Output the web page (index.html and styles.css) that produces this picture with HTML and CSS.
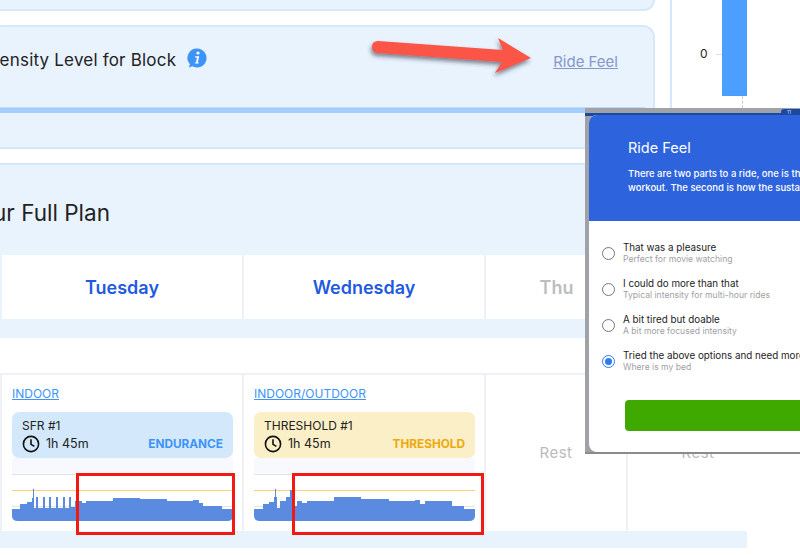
FILE: index.html
```html
<!DOCTYPE html>
<html lang="en">
<head>
<meta charset="utf-8">
<title>Ride Feel</title>
<link rel="stylesheet" href="styles.css">
</head>
<body>
<div class="page">
  <main class="main">
    <div class="stub-card"></div>
    <section class="level-card">
      <div class="level-row">
        <h2 class="level-title">Intensity Level for Block</h2>
        <svg class="info" viewBox="0 0 20 20" width="20" height="20"><path d="M10 0.5a9.5 9.5 0 1 1-4.6 17.8L1.6 19.5l1.4-3A9.5 9.5 0 0 1 10 0.5z" fill="#3d94f6"/><circle cx="11" cy="5" r="1.6" fill="#fff"/><path d="M8.3 8.2h3.9l-1.4 6.2h1.1l-.3 1.200H7.7l.3-1.200h1L10 9.400H8z" fill="#fff"/></svg>
        <a class="feel-link" href="#">Ride Feel</a>
      </div>
    </section>
    <div class="progress"></div>
    <div class="sub-band"></div>
    <section class="plan">
      <h1 class="plan-title">Your Full Plan</h1>
      <div class="days">
        <div class="day">Tuesday</div>
        <div class="day">Wednesday</div>
        <div class="day day-off">Thu</div>
      </div>
    </section>
    <div class="spacer"></div>
    <div class="cells">
      <div class="cell">
        <a class="kind" href="#">INDOOR</a>
        <div class="ride ride-blue">
          <div class="ride-name">SFR #1</div>
          <div class="ride-meta">
            <svg class="clock" viewBox="0 0 18 18" width="18" height="18"><circle cx="9" cy="9" r="7.600" fill="none" stroke="#111" stroke-width="1.600"/><path d="M9 4.200V9.400l3.400 2" fill="none" stroke="#111" stroke-width="1.600"/></svg>
            <span class="dur">1h 45m</span>
            <span class="zone zone-blue">ENDURANCE</span>
          </div>
        </div>
        <svg class="chart" viewBox="0 0 221 64" width="221" height="64">
          <rect width="221" height="16" fill="#f7f9fe"/>
          <path d="M0 16.500h221" stroke="#e4e4e8"/>
          <path d="M0 32.500h221" stroke="#fbcf75"/>
          <path d="M0 48.500h221" stroke="#e4e4e8"/>
          <path d="M21 31h1v12h-1z" fill="#5a8be0"/>
          <path d="M0 51H8V46H15V44H20V40H22V50H24V39H26V50H31V39H33V50H37V39H39V50H44V39H46V50H51V39H53V50H57V39H59V49H63V43H70V45H74V43H101V40H128V41H155V43H181V42H187V45H191V48H210V51H221V58Q221 63 215 63H6Q0 63 0 58Z" fill="#5a8be0"/>
        </svg>
      </div>
      <div class="cell">
        <a class="kind" href="#">INDOOR/OUTDOOR</a>
        <div class="ride ride-yellow">
          <div class="ride-name">THRESHOLD #1</div>
          <div class="ride-meta">
            <svg class="clock" viewBox="0 0 18 18" width="18" height="18"><circle cx="9" cy="9" r="7.600" fill="none" stroke="#111" stroke-width="1.600"/><path d="M9 4.200V9.400l3.400 2" fill="none" stroke="#111" stroke-width="1.600"/></svg>
            <span class="dur">1h 45m</span>
            <span class="zone zone-yellow">THRESHOLD</span>
          </div>
        </div>
        <svg class="chart" viewBox="0 0 221 64" width="221" height="64">
          <rect width="221" height="16" fill="#f7f9fe"/>
          <path d="M0 16.500h221" stroke="#e4e4e8"/>
          <path d="M0 32.500h221" stroke="#fbcf75"/>
          <path d="M0 48.500h221" stroke="#e4e4e8"/>
          <path d="M21 31h1v12h-1z" fill="#5a8be0"/>
          <path d="M0 51H9V46H15V44H20V39H23V50H26V43H32V39H36V32H38V48H43V43H48V45H53V43H80V39H107V41H135V43H161V42H166V46H171V43H198V48H210V51H221V58Q221 63 215 63H6Q0 63 0 58Z" fill="#5a8be0"/>
        </svg>
      </div>
      <div class="cell cell-rest"><span class="rest">Rest</span></div>
      <div class="cell cell-rest"><span class="rest">Rest</span></div>
    </div>
    <div class="foot-band"></div>
  </main>

  <aside class="side">
    <span class="axis-label">0</span>
    <span class="axis-tick"></span>
    <div class="bar-col">
      <div class="bar"></div>
      <div class="bar-stem"></div>
    </div>
  </aside>

  <svg class="arrow" viewBox="0 0 160 40" width="160" height="40">
    <defs><filter id="arrow-shadow" x="-10%" y="-30%" width="120%" height="170%"><feDropShadow dx="-1" dy="3" stdDeviation="2" flood-color="#334" flood-opacity=".6"/></filter></defs>
    <path d="M6 3 131 12 126 0 159 20 123 35 130 24 6 15Q0 14.500 0 9 0 3 6 3Z" fill="#fb5446" filter="url(#arrow-shadow)"/>
  </svg>

  <span class="mark mark-a"></span>
  <span class="mark mark-b"></span>

  <div class="shot">
    <div class="shot-strip"><span class="shot-num">11</span></div>
    <div class="modal">
      <header class="modal-head">
        <h3 class="modal-title">Ride Feel</h3>
        <p class="modal-text">There are two parts to a ride, one is the actual<br>workout. The second is how the sustained effort feels</p>
      </header>
      <div class="options">
        <div class="option">
          <span class="radio"></span>
          <div><div class="opt-title">That was a pleasure</div><div class="opt-sub">Perfect for movie watching</div></div>
        </div>
        <div class="option">
          <span class="radio"></span>
          <div><div class="opt-title">I could do more than that</div><div class="opt-sub">Typical intensity for multi-hour rides</div></div>
        </div>
        <div class="option">
          <span class="radio"></span>
          <div><div class="opt-title">A bit tired but doable</div><div class="opt-sub">A bit more focused intensity</div></div>
        </div>
        <div class="option">
          <span class="radio radio-on"></span>
          <div><div class="opt-title">Tried the above options and need more</div><div class="opt-sub">Where is my bed</div></div>
        </div>
      </div>
      <div class="submit"></div>
    </div>
  </div>
</div>
</body>
</html>
```

FILE: styles.css
```css
* { box-sizing: border-box; }
html, body { margin: 0; padding: 0; background: #fff; }
body { font-family: Inter, "Noto Sans", sans-serif; color: #222; }
.page { position: relative; width: 800px; height: 555px; overflow: hidden; display: flex; align-items: flex-start; }

.main { width: 670px; flex: none; display: flex; flex-direction: column; margin-left: -10px; }
.stub-card { height: 11px; width: 665px; background: #e8f3fe; border: 2px solid #d6e8fb; border-top: 0; border-radius: 0 0 12px 12px; }
.level-card { margin-top: 14px; width: 665px; height: 83px; background: #e8f3fe; border: 2px solid #d6e8fb; border-bottom: 0; border-radius: 12px 12px 0 0; }
.level-row { height: 68px; display: flex; align-items: center; justify-content: flex-end; padding-right: 35px; }
.level-title { margin: -2px 11px 0 0; font-size: 17px; font-weight: 400; letter-spacing: .2px; white-space: nowrap; color: #222; }
.info { flex: none; margin-top: -7px; }
.feel-link { margin-left: 346px; font-size: 15px; color: #8597c8; white-space: nowrap; }
.progress { width: 655px; height: 6px; background: #a6cefa; margin-top: -1px; border-top: 1px solid #bcdafb; }
.sub-band { width: 665px; height: 36px; background: #e8f3fe; border-bottom: 2px solid #d6e8fb; }
.plan { margin-top: 14px; width: 665px; background: #e8f3fe; border-top: 2px solid #d6e8fb; height: 175px; display: flex; flex-direction: column; flex: none; }
.plan-title { margin: 32px 0 0 -24px; font-size: 22.500px; font-weight: 400; color: #222; height: 58px; line-height: 32px; white-space: nowrap; }
.days { display: flex; gap: 2px; margin-left: 12px; width: 810px; height: 64px; background: #f0f1f6; padding-right: 2px; }
.day { flex: none; width: 240px; height: 64px; background: #fff; color: #1f5bdf; font-size: 18px; font-weight: 600; display: flex; align-items: center; justify-content: center; }
.day-off { color: #bdbdbd; width: 141px; }
.spacer { height: 35px; width: 750px; flex: none; }
.cells { display: flex; gap: 2px; width: 768px; height: 158px; margin-left: 10px; background: #f0f1f6; padding: 2px 0 0 2px; flex: none; }
.cell { flex: none; width: 240px; background: #fff; padding: 11px 9px 0 10px; display: flex; flex-direction: column; }
.cell-rest { width: 140px; padding-right: 10px; align-items: center; padding-top: 68px; }
.kind { font-size: 12px; color: #3d94f6; line-height: 16px; height: 26px; }
.ride { height: 46px; border-radius: 7px; padding: 6px 10px 0; display: flex; flex-direction: column; flex: none; }
.ride-blue { background: #d3e9fb; }
.ride-yellow { background: #fbefc8; }
.ride-name { font-size: 12px; line-height: 16px; color: #222; white-space: nowrap; }
.ride-meta { display: flex; align-items: center; gap: 6px; height: 19px; }
.clock { flex: none; }
.dur { font-size: 12.500px; color: #222; }
.zone { margin-left: auto; font-size: 11.800px; font-weight: 700; }
.zone-blue { color: #3d94f6; }
.zone-yellow { color: #eba90f; }
.chart { display: block; flex: none; }
.rest { font-size: 15px; color: #bbb; letter-spacing: .5px; }
.foot-band { width: 747px; height: 17px; background: #e8f3fe; margin-left: 10px; flex: none; }

.side { position: absolute; left: 670px; top: 0; width: 130px; height: 108px; border-left: 2px solid #d6e8fb; background: #fff; }
.axis-label { position: absolute; left: 28px; top: 46px; font-size: 12px; color: #222; }
.axis-tick { position: absolute; left: 44px; top: 54px; width: 6px; height: 1px; background: #ddd; }
.bar-col { position: absolute; left: 50px; top: 0; width: 25px; }
.bar { height: 96px; background: #4d9fff; border: 1px solid #46a0fb; border-width: 0 1px 1px; }
.bar-stem { width: 0; height: 12px; margin-left: 20px; border-left: 1px dashed #ccc; }

.arrow { position: absolute; left: 372px; top: 38px; overflow: visible; }

.mark { position: absolute; border: 3px solid #f11a12; background: transparent; }
.mark-a { left: 76px; top: 473px; width: 159px; height: 62px; }
.mark-b { left: 292px; top: 473px; width: 192px; height: 62px; }

.shot { position: absolute; left: 585px; top: 108px; width: 240px; height: 346px; background: #a0a2a8; padding: 5px 0 0 4px; border-bottom: 2px solid #8b8b8f; }
.shot-strip { position: absolute; left: 0; top: 5px; width: 100%; height: 3px; background: #1a4aa0; }
.shot-num { position: absolute; left: 196px; top: -4px; width: 30px; height: 7px; font-size: 5px; line-height: 7px; color: #cfd8ee; background: #1a4aa0; padding-left: 6px; border-radius: 3px 0 0 0; }
.modal { position: relative; width: 236px; height: 337px; margin-top: 2px; background: #fff; border-radius: 8px 0 0 8px; overflow: hidden; }
.modal-head { height: 106px; background: #2d63dc; padding: 23px 0 0 39px; color: #fff; }
.modal-title { margin: 0 0 9px; font-size: 14.500px; font-weight: 400; line-height: 20px; white-space: nowrap; }
.modal-text { margin: 0; font-size: 9.500px; line-height: 13.500px; width: 300px; font-weight: 500; white-space: nowrap; }
.options { padding: 19px 0 0 13px; display: flex; flex-direction: column; gap: 11px; width: 300px; }
.option { display: flex; align-items: center; gap: 8px; height: 25px; }
.radio { flex: none; width: 13px; height: 13px; border: 1px solid #777; border-radius: 50%; background: #fff; margin-top: 2px; }
.radio-on { border-color: #2f7bf0; position: relative; }
.radio-on::after { content: ""; position: absolute; left: 2px; top: 2px; width: 7px; height: 7px; border-radius: 50%; background: #2f7bf0; }
.opt-title { font-size: 9.800px; line-height: 13px; color: #222; white-space: nowrap; }
.opt-sub { font-size: 8.600px; line-height: 11px; color: #a0a0a6; white-space: nowrap; }
.submit { position: absolute; left: 36px; top: 285px; width: 230px; height: 31px; background: #40a900; border-radius: 4px; }
```
